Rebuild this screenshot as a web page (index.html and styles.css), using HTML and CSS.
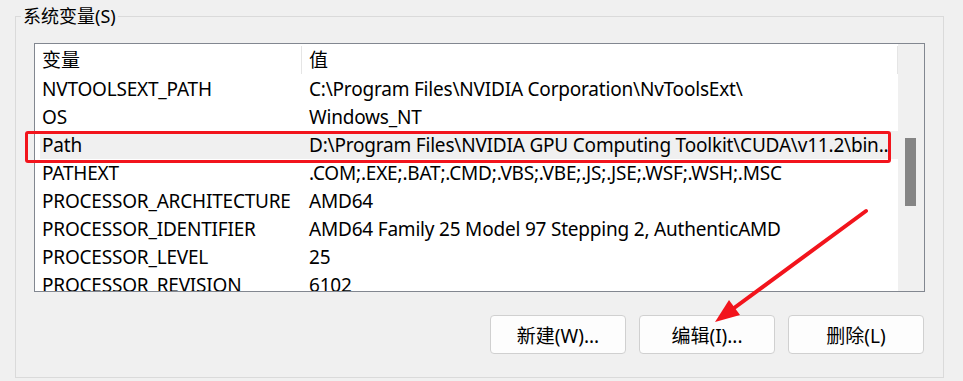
FILE: index.html
```html
<!DOCTYPE html>
<html lang="zh-CN">
<head>
    <meta charset="UTF-8">
    <title>系统变量</title>
    <link rel="stylesheet" href="styles.css">
</head>
<body>
    <fieldset class="group">
        <legend>系统变量(S)</legend>

        <!-- variable list -->
        <div class="listview">
            <div class="list-body">
                <div class="list-header">
                    <div class="head-name">变量</div>
                    <div class="head-value">值</div>
                </div>
                <div class="row"><div class="cell-name">NVTOOLSEXT_PATH</div><div class="cell-value">C:\Program Files\NVIDIA Corporation\NvToolsExt\</div></div>
                <div class="row"><div class="cell-name">OS</div><div class="cell-value">Windows_NT</div></div>
                <div class="row selected"><div class="cell-name">Path</div><div class="cell-value">D:\Program Files\NVIDIA GPU Computing Toolkit\CUDA\v11.2\bin..</div></div>
                <div class="row"><div class="cell-name">PATHEXT</div><div class="cell-value">.COM;.EXE;.BAT;.CMD;.VBS;.VBE;.JS;.JSE;.WSF;.WSH;.MSC</div></div>
                <div class="row"><div class="cell-name">PROCESSOR_ARCHITECTURE</div><div class="cell-value">AMD64</div></div>
                <div class="row"><div class="cell-name">PROCESSOR_IDENTIFIER</div><div class="cell-value">AMD64 Family 25 Model 97 Stepping 2, AuthenticAMD</div></div>
                <div class="row"><div class="cell-name">PROCESSOR_LEVEL</div><div class="cell-value">25</div></div>
                <div class="row"><div class="cell-name">PROCESSOR_REVISION</div><div class="cell-value">6102</div></div>
            </div>
            <div class="scrollbar"><div class="thumb"></div></div>
        </div>

        <div class="buttons">
            <button>新建(W)...</button>
            <button>编辑(I)...</button>
            <button>删除(L)</button>
        </div>
    </fieldset>

    <!-- annotations drawn over the dialog -->
    <div class="mark-box"></div>
    <svg class="mark-arrow" width="963" height="381" viewBox="0 0 963 381">
        <line x1="866" y1="211" x2="730" y2="311" stroke="#f2141c" stroke-width="4" stroke-linecap="round"/>
        <polygon points="715,322 740,315 729,300" fill="#f2141c"/>
    </svg>
</body>
</html>
```

FILE: styles.css
```css
body {
    margin: 0;
    background: #f0f0f0;
    color: #000;
    font-family: "Noto Sans", "Noto Sans CJK SC", sans-serif;
    font-size: 19px;
    width: 963px;
    height: 381px;
    overflow: hidden;
    position: relative;
}

/* group box */
.group {
    box-sizing: border-box;
    width: 929px;
    height: 372px;
    margin: 6px 0 0 15px;
    padding: 17px 18px 0 18px;
    border: 1px solid #dadada;
}
.group legend {
    padding: 0 2px;
    margin-left: -13px;
    line-height: 20px;
    font-size: 18px;
}

/* list view */
.listview {
    display: flex;
    height: 249px;
    box-sizing: border-box;
    border: 1px solid #828790;
    background: #fff;
}
.list-body {
    flex: 1;
    overflow: hidden;
}
.list-header {
    display: flex;
    height: 31px;
    align-items: center;
}
.head-name,
.head-value {
    box-sizing: border-box;
    height: 28px;
    line-height: 28px;
    padding-left: 7px;
    border-right: 1px solid #e5e5e5;
}
.head-name {
    width: 267px;
}
.head-value {
    flex: 1;
}
.row {
    display: grid;
    grid-template-columns: 262px 1fr;
    height: 28px;
    line-height: 28px;
    margin-left: 5px;
    white-space: nowrap;
    letter-spacing: -0.2px;
}
.row.selected {
    background: #f0f0f0;
}
.cell-name {
    padding-left: 2px;
}
.cell-value {
    padding-left: 7px;
    overflow: hidden;
}

.scrollbar {
    width: 26px;
    background: #f0f0f0;
    position: relative;
}
.thumb {
    position: absolute;
    left: 7px;
    top: 94px;
    width: 11px;
    height: 68px;
    background: #858585;
}

/* buttons */
.buttons {
    display: flex;
    justify-content: flex-end;
    gap: 13px;
    margin-top: 23px;
    padding-right: 1px;
}
.buttons button {
    width: 136px;
    height: 39px;
    background: #fdfdfd;
    border: 1px solid #d0d0d0;
    border-radius: 4px;
    font-family: "Noto Sans", "Noto Sans CJK SC", sans-serif;
    font-size: 19px;
    color: #000;
}

/* red annotation */
.mark-box {
    position: absolute;
    left: 25px;
    top: 131px;
    width: 866px;
    height: 32px;
    box-sizing: border-box;
    border: 3px solid #f2141c;
    border-radius: 3px;
}
.mark-arrow {
    position: absolute;
    left: 0;
    top: 0;
}
```
